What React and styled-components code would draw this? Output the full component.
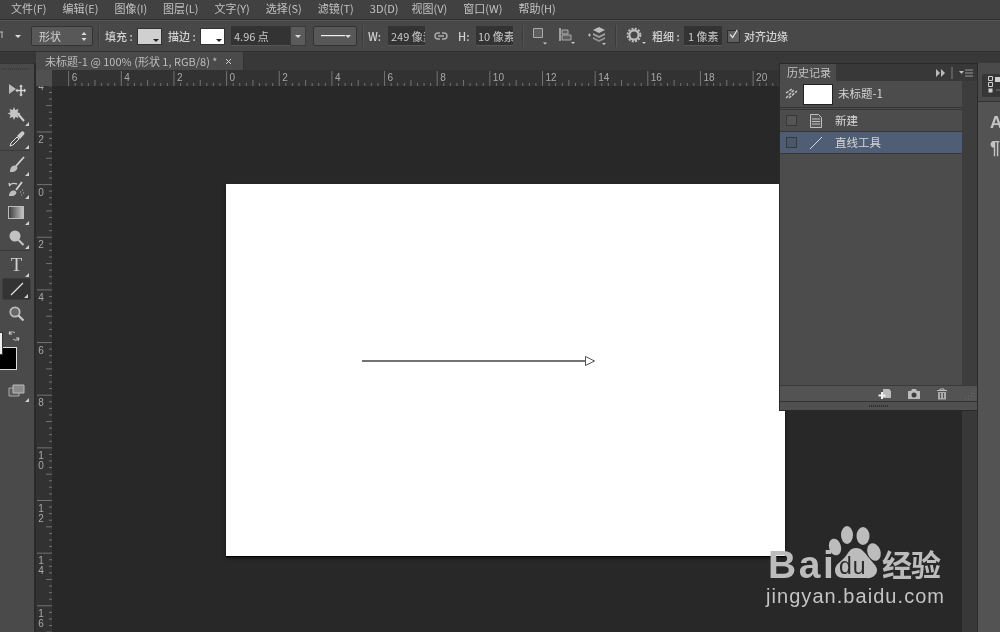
import React from "react";
import styled, { createGlobalStyle } from "styled-components";

const Global = createGlobalStyle`
  html, body { margin: 0; padding: 0; background: #282828; }
  * { box-sizing: border-box; }
`;
const FONT = `"Noto Sans CJK SC", "Liberation Sans", sans-serif`;

const Shell = styled.div`
  position: relative; width: 1000px; height: 632px; overflow: hidden;
  display: flex; flex-direction: column; background: #282828;
  font-family: ${FONT}; color: #c4c4c4; font-size: 11px; filter: blur(0.3px);
`;
const MenuBar = styled.div`
  height: 20px; flex: none; display: flex; gap: 16px; padding: 0 0 3px 11px; align-items: center;
  background: #414141; border-bottom: 1px solid #2e2e2e; white-space: nowrap; color: #c2c2c2;
`;
const MenuItem = styled.span`font-size: 11px; line-height: 16px; margin-right: ${p => p.$mr || 0}px;`;

const OptionsBar = styled.div`
  height: 32px; flex: none; display: flex; align-items: center; white-space: nowrap;
  background: #484848; border-bottom: 1px solid #2f2f2f; border-top: 1px solid #555;
`;
const Opt = styled.div`
  flex: none; margin-left: ${p => p.$ml || 0}px; display: flex; align-items: center;
`;
const Label = styled(Opt)`
  width: ${p => (p.$w ? `${p.$w}px` : "auto")}; font-size: 11px; color: #d2d2d2; font-weight: 500;
`;
const Divider = styled(Opt)`width: 1px; height: 22px; background: #3a3a3a; box-shadow: 1px 0 0 #545454;`;
const SelectBox = styled(Opt)`
  width: ${p => p.$w}px; height: 20px; border: 1px solid #333; border-radius: 2px;
  background: #585858; justify-content: space-between; padding: 0 5px 0 7px; font-size: 11px; color: #d2d2d2;
`;
const Swatch = styled(Opt)`
  position: relative; width: 25px; height: 17px; background: ${p => p.$c}; border: 1px solid #333;
  &::after { content: ""; position: absolute; right: 2px; bottom: 2px; border: 3px solid transparent; border-top-color: #222; border-bottom: 0; }
`;
const NumberInput = styled(Opt)`
  width: ${p => p.$w}px; height: 20px; background: #333; overflow: hidden; padding-left: ${p => p.$pl ?? 4}px;
  font-size: 11px; color: #c9c9c9; border-bottom: 1px solid #565656;
`;
const DropBtn = styled(Opt)`
  width: 16px; height: 20px; background: #5b5b5b; justify-content: center; border: 1px solid #3a3a3a;
`;
const Caret = styled.i`
  display: block; border: 3px solid transparent; border-top-color: ${p => p.$c || "#ddd"}; border-bottom: 0;
`;
const Check = styled(Opt)`
  width: 13px; height: 13px; background: #606060; border: 1px solid #2e2e2e; justify-content: center;
`;

const Workspace = styled.div`flex: 1; display: flex; min-height: 0; background: #383838;`;
const ToolBar = styled.div`
  width: 36px; flex: none; display: flex; flex-direction: column; align-items: stretch; background: #4a4a4a;
  margin-top: 11px; border-top: 1px solid #333; border-right: 2px solid #2a2a2a; padding-top: 4px;
`;
const Grip = styled.div`
  height: 2px; margin: 0 4px 7px 2px; flex: none;
  background: repeating-linear-gradient(90deg, #3c3c3c 0 1px, transparent 1px 2px);
`;
const Tool = styled.div`
  height: ${p => p.$h || 25}px; flex: none; position: relative; display: flex; align-items: center; justify-content: center;
  margin: 0 3px 0 2px; font-family: "Liberation Serif", serif; font-size: 19px; color: #cfcfcf;
  ${p => p.$active && `background: #333; border: 1px solid #3c3c3c; border-radius: 2px;`}
  ${p => p.$tri && `&::after { content: ""; position: absolute; right: 2px; bottom: 1px; border-left: 4px solid transparent; border-bottom: 4px solid #d0d0d0; }`}
`;
const ToolRule = styled.div`height: 1px; flex: none; background: #3a3a3a; margin: 0 4px ${p => p.$mb || 0}px 0;`;
const Colors = styled.div`height: 50px; flex: none; position: relative;`;
const BgColor = styled.div`
  position: absolute; left: -6px; top: 19px; width: 23px; height: 23px; background: #000; border: 1px solid #ddd;
`;
const FgColor = styled.div`
  position: absolute; left: -8px; top: 4px; width: 11px; height: 23px; background: #eee; border: 1px solid #333;
`;
const SwapIcon = styled.div`position: absolute; left: 8px; top: 2px; width: 12px; height: 12px;`;

const Main = styled.div`
  flex: 1; min-width: 0; display: flex; flex-direction: column;
`;
const TabBar = styled.div`
  height: 18px; flex: none; background: #383838; display: flex; align-items: flex-end;
`;
const DocTab = styled.div`
  width: 208px; height: 18px; background: #4a4a4a; display: flex; align-items: center; padding-left: 9px;
  font-size: 11px; color: #bcbcbc; white-space: nowrap; gap: 7px; border-right: 1px solid #333;
`;
const RulerRow = styled.div`height: 16px; flex: none; display: flex; background: #323232;`;
const RulerCorner = styled.div`width: 16px; flex: none; background: #505050;`;
const CanvasRow = styled.div`flex: 1; min-height: 0; display: flex;`;
const VRulerWrap = styled.div`width: 16px; flex: none; background: #323232;`;
const Canvas = styled.div`
  flex: 1; min-width: 0; background: #282828; padding: 98px 0 0 174px; overflow: hidden;
  border-right: 15px solid #383838;
`;
const Doc = styled.div`
  width: 559px; height: 372px; background: #fff; box-shadow: 0 1px 0 #000, 0 2px 3px rgba(0,0,0,.6);
`;
const Dock = styled.div`
  width: 23px; flex: none; background: #535353; border-left: 1px solid #2b2b2b; margin-top: 11px;
  display: flex; flex-direction: column; overflow: hidden;
`;
const DockCap = styled.div`
  height: 39px; flex: none; border-bottom: 1px solid #333; padding: 11px 0 0 4px; background: #4a4a4a;
`;
const DockBox = styled.div`
  width: 24px; height: 23px; background: #363636; border-radius: 2px 0 0 2px; padding: 2px 0 0 6px;
`;
const DockGlyph = styled.div`
  font-family: "Liberation Sans", sans-serif; font-size: ${p => p.$fs}px; font-weight: 700; color: #c4c4c4;
  padding-left: 12px; height: ${p => p.$h}px; display: flex; align-items: center;
`;

const HistoryPanel = styled.div`
  position: absolute; left: 780px; top: 64px; width: 197px; height: 346px;
  display: flex; flex-direction: column; background: #4b4b4b; box-shadow: 0 0 0 1px #2a2a2a;
`;
const PanelHead = styled.div`
  height: 17px; flex: none; display: flex; justify-content: space-between; align-items: center; background: #383838; padding-right: 4px;
`;
const PanelTab = styled.div`
  width: 56px; height: 17px; background: #4b4b4b; font-size: 11px; color: #c4c4c4; padding-left: 7px; line-height: 16px;
`;
const HeadIcons = styled.div`display: flex; align-items: center; gap: 5px;`;
const PanelBody = styled.div`flex: 1; display: flex; min-height: 0;`;
const List = styled.div`flex: 1; display: flex; flex-direction: column; background: #4c4c4c;`;
const SnapRow = styled.div`
  height: 27px; flex: none; display: flex; align-items: center; padding-left: 5px;
  border-bottom: 1px solid #353535; font-size: 11.5px; color: #d4d4d4;
`;
const SnapName = styled.span`margin-top: -2px;`;
const Thumb = styled.div`
  width: 30px; height: 21px; background: #fff; border: 1px solid #222; margin: 0 5px 0 5px; flex: none;
`;
const HistRow = styled.div`
  height: ${p => (p.$first ? 23 : 22)}px; flex: none; display: flex; align-items: center; padding-left: 6px; font-size: 11.5px; color: #d6d6d6;
  border-bottom: 1px solid #353535; background: ${p => p.$sel ? "#4f5e74" : "#4c4c4c"};
  border-top: ${p => p.$first ? "1px solid #353535" : "0"}; margin-top: ${p => p.$first ? 1 : 0}px;
`;
const RowText = styled.span`margin-top: -2px;`;
const RowCheck = styled.div`width: 11px; height: 11px; border: 1px solid #383838; background: ${p => p.$sel ? "#4a586c" : "#555"}; flex: none;`;
const RowIcon = styled.div`width: 16px; height: 16px; margin: 0 10px 0 12px; flex: none; display: flex;`;
const Scrollbar = styled.div`width: 15px; flex: none; background: #3d3d3d;`;
const PanelFoot = styled.div`
  height: 17px; flex: none; display: flex; align-items: center; justify-content: flex-end; gap: 15px; padding-right: 2px;
  background: #535353; border-top: 1px solid #3a3a3a; border-bottom: 1px solid #333;
`;
const PanelGrip = styled.div`
  height: 8px; flex: none; background: #505050; display: flex; align-items: center; justify-content: center;
  &::after { content: ""; width: 19px; height: 2px; background: repeating-linear-gradient(90deg, #2c2c2c 0 1px, transparent 1px 2px); }
`;

const Watermark = styled.div`
  position: absolute; left: 766px; top: 524px; width: 182px; height: 86px; color: #bcbcbc;
`;
const Bai = styled.span`
  position: absolute; left: 2px; top: 19px; font-family: "Liberation Sans", sans-serif; font-weight: 700; font-size: 39px; line-height: 44px; letter-spacing: 2.6px;
`;
const Du = styled.span`
  position: absolute; left: 73px; top: 29px; font-family: "Liberation Sans", sans-serif; font-weight: 400; font-size: 23px; line-height: 26px; letter-spacing: 1px; color: #2b2b2b;
`;
const Jing = styled.span`
  position: absolute; left: 116px; top: 19px; font-size: 30px; line-height: 40px; font-weight: 700; white-space: nowrap; letter-spacing: -1px;
`;
const Url = styled.span`
  position: absolute; left: 0; top: 60px; font-family: "Liberation Sans", sans-serif; font-size: 20px; line-height: 24px; letter-spacing: 1.05px; white-space: nowrap; color: #c4c4c4;
`;
const PawSvg = styled.svg`position: absolute; left: 0; top: 0;`;

const ORIGIN_X = 226.6, ORIGIN_Y = 184.6, STEP = 52.65;
const TICK = "#727272", DIGIT = "#a8a8a8";

function HRuler() {
  const items = []; const labels = [];
  for (let i = -24; i <= 90; i++) {
    const x = ORIGIN_X + (i / 8) * STEP - 52;
    if (x < 0 || x > 924) continue;
    const h = i % 8 === 0 ? 15 : i % 4 === 0 ? 6 : 3;
    items.push(<line key={i} x1={x} x2={x} y1={16} y2={16 - h} stroke={TICK} />);
    if (i % 8 === 0) labels.push(
      <text key={"l" + i} x={x + 3} y={11} fill={DIGIT} fontSize="10" fontFamily="Liberation Sans, sans-serif">{Math.abs(i / 4)}</text>
    );
  }
  return <svg width="908" height="16" style={{ display: "block" }}>{items}{labels}</svg>;
}
function VRuler() {
  const items = []; const labels = [];
  for (let i = -16; i <= 72; i++) {
    const y = ORIGIN_Y + (i / 8) * STEP - 86;
    const w = i % 8 === 0 ? 15 : i % 4 === 0 ? 6 : 3;
    items.push(<line key={i} y1={y} y2={y} x1={16 - w} x2={16} stroke={TICK} />);
    if (i % 8 === 0) {
      String(Math.abs(i / 4)).split("").forEach((d, k) => labels.push(
        <text key={`t${i}${k}`} x={5} y={y + 11 + k * 10} textAnchor="middle" fill={DIGIT} fontSize="10" fontFamily="Liberation Sans, sans-serif">{d}</text>
      ));
    }
  }
  return <svg width="16" height="546" style={{ display: "block" }}>{items}{labels}</svg>;
}

const Ico = ({ w = 16, h = 16, children, style }) => (
  <svg width={w} height={h} viewBox={`0 0 ${w} ${h}`} style={{ display: "block", ...style }}>{children}</svg>
);

function Options() {
  return (
    <OptionsBar>
      <Opt><Ico w={4} h={10}><path d="M0 1h3M2 1v6" stroke="#bbb" /></Ico></Opt>
      <Opt $ml={11}><Caret /></Opt>
      <SelectBox $w={62} $ml={10}>
        <span>形状</span>
        <Ico w={6} h={11}><path d="M3 1 L5.5 4 H.5 Z M3 10 L5.5 7 H.5 Z" fill="#ddd" /></Ico>
      </SelectBox>
      <Divider $ml={5} />
      <Label $ml={6} $w={27}>填充 :</Label>
      <Swatch $c="#d0d0d0" $ml={5} />
      <Label $ml={6} $w={27}>描边 :</Label>
      <Swatch $c="#fff" $ml={5} />
      <NumberInput $w={59} $ml={6} $pl={3}>4.96 点</NumberInput>
      <DropBtn><Caret /></DropBtn>
      <SelectBox $w={44} $ml={7}>
        <Ico w={30} h={4}><path d="M0 1.5H30" stroke="#eee" strokeWidth="1.5" /></Ico>
        <Caret />
      </SelectBox>
      <Divider $ml={5} />
      <Label $ml={5} $w={12}>W:</Label>
      <NumberInput $w={37} $ml={8} $pl={3}>249 像素</NumberInput>
      <Opt $ml={9}>
        <Ico w={14} h={10}><path d="M6 2H4a3 3 0 0 0 0 6h2M8 2h2a3 3 0 0 1 0 6H8M4 5h6" fill="none" stroke="#aaa" strokeWidth="1.4" /></Ico>
      </Opt>
      <Label $ml={10} $w={12}>H:</Label>
      <NumberInput $w={37} $ml={6} $pl={2}>10 像素</NumberInput>
      <Divider $ml={9} />
      <Opt $ml={9}>
        <Ico w={15} h={18}><path d="M1.5 1.5h9v9h-9z" fill="#5e5e5e" stroke="#aaa" /><path d="M11 15.5h4l-2 2z" fill="#ccc" /></Ico>
      </Opt>
      <Opt $ml={12}>
        <Ico w={16} h={18}><path d="M1 1v13" stroke="#bbb" strokeWidth="1.5" /><path d="M3 3h6v4H3zM3 8h9v5H3z" fill="#5e5e5e" stroke="#aaa" /><path d="M12 15h4l-2 2z" fill="#ccc" /></Ico>
      </Opt>
      <Opt $ml={12}>
        <Ico w={20} h={20}>
          <path d="M1 9h3M2.5 7.5v3" stroke="#bbb" />
          <path d="M12 1l6 3-6 3-6-3z" fill="#bbb" /><path d="M6 7l6 3 6-3v2l-6 3-6-3z" fill="#a0a0a0" /><path d="M6 11l6 3 6-3v2l-6 3-6-3z" fill="#909090" /><path d="M15 17h4l-2 2z" fill="#ccc" />
        </Ico>
      </Opt>
      <Divider $ml={8} />
      <Opt $ml={10}>
        <Ico w={20} h={18}>
          <circle cx="8" cy="8" r="4.6" fill="none" stroke="#bdbdbd" strokeWidth="2.2" />
          <circle cx="8" cy="8" r="6.4" fill="none" stroke="#bdbdbd" strokeWidth="2" strokeDasharray="2 1.35" />
          <path d="M16 15h4l-2 2z" fill="#ccc" />
        </Ico>
      </Opt>
      <Label $ml={6} $w={26}>粗细 :</Label>
      <NumberInput $w={38} $ml={6} $pl={4}>1 像素</NumberInput>
      <Check $ml={5}>
        <Ico w={13} h={13} style={{ marginTop: -3 }}><path d="M2.5 6.5l3 3.5 5.5-9" fill="none" stroke="#e4e4e4" strokeWidth="1.4" /></Ico>
      </Check>
      <Label $ml={4}>对齐边缘</Label>
    </OptionsBar>
  );
}

function Tools() {
  return (
    <ToolBar>
      <Grip />
      <Tool $h={25}><Ico w={18} h={14}>
        <path d="M1 1l7 5-7 5z" fill="#bbb" /><path d="M13 3v9M8.5 7.5h9" stroke="#d4d4d4" strokeWidth="1.6" /><path d="M13 1.5l2 2h-4zM13 13.5l-2-2h4zM7.5 7.5l2-2v4zM18 7.5l-2 2v-4z" fill="#d4d4d4" />
      </Ico></Tool>
      <Tool $h={25} $tri><Ico w={20} h={18}>
        <path d="M11 8l6 7" stroke="#cfcfcf" strokeWidth="2" /><path d="M7 1l1.3 3 3.2-1-1 3.2 3 1.3-3 1.3 1 3.2-3.2-1L7 14l-1.3-3-3.2 1 1-3.2-3-1.3 3-1.3-1-3.2 3.2 1z" fill="#c4c4c4" />
      </Ico></Tool>
      <Tool $h={23} $tri><Ico w={18} h={18}>
        <path d="M2 16l1-3 6-6 2 2-6 6z" fill="#484848" stroke="#ddd" /><path d="M9 6l4-4a1.8 1.8 0 0 1 3 2.500l-4 4.500z" fill="#ccc" />
      </Ico></Tool>
      <ToolRule $mb={2} />
      <Tool $h={24} $tri><Ico w={18} h={18}>
        <path d="M16 1L8 10" stroke="#d2d2d2" strokeWidth="1.8" /><path d="M2 16c0-4 2-7 5-6.500s3 3 1 5-4 1.500-6 1.500z" fill="#bdbdbd" />
      </Ico></Tool>
      <Tool $h={23} $tri><Ico w={20} h={18}>
        <path d="M2 6c2-3 5-3 8-2M3 6l-1-3" fill="none" stroke="#ccc" strokeWidth="1.4" /><path d="M15 2L9 10" stroke="#d2d2d2" strokeWidth="1.8" /><path d="M2 16c0-3 2-6 5-5.500s3 3 1 4.500-4 1-6 1z" fill="#bdbdbd" /><path d="M13 12h1M15 10h1M16 13h1M14 15h1" stroke="#bbb" />
      </Ico></Tool>
      <Tool $h={26} $tri><Ico w={18} h={14}>
        <defs><linearGradient id="gr"><stop offset="0" stopColor="#3a3a3a" /><stop offset="1" stopColor="#c8c8c8" /></linearGradient></defs>
        <rect x=".5" y=".5" width="15" height="12" fill="url(#gr)" stroke="#bbb" />
      </Ico></Tool>
      <Tool $h={24} $tri><Ico w={18} h={18}>
        <circle cx="7" cy="7" r="5.500" fill="#c2c2c2" /><path d="M10.500 11l5 5" stroke="#c8c8c8" strokeWidth="2" />
      </Ico></Tool>
      <ToolRule $mb={1} />
      <Tool $h={26} $tri>T</Tool>
      <Tool $h={22} $tri $active><Ico w={16} h={16}><path d="M2 14L14 2" stroke="#e0e0e0" strokeWidth="1.3" /></Ico></Tool>
      <Tool $h={28}><Ico w={18} h={18}>
        <circle cx="7" cy="7" r="4.700" fill="#666" stroke="#bdbdbd" strokeWidth="1.800" /><path d="M10.500 10.500l5 5" stroke="#c8c8c8" strokeWidth="2.200" />
      </Ico></Tool>
      <Colors>
        <BgColor />
        <FgColor />
        <SwapIcon><Ico w={12} h={12}><path d="M2 1l-1 3 3 0M1.500 4C2 2 5 1 7 3M10 11l1-3-3 0M10.500 8C10 10 7 11 5 9" fill="none" stroke="#d0d0d0" /></Ico></SwapIcon>
      </Colors>
      <Tool $h={25} $tri><Ico w={18} h={14}>
        <path d="M1 4h10v8H1z" fill="#5a5a5a" stroke="#aaa" /><path d="M5 1h11v8H5z" fill="#8a8a8a" stroke="#bbb" />
      </Ico></Tool>
    </ToolBar>
  );
}

function History() {
  return (
    <HistoryPanel>
      <PanelHead>
        <PanelTab>历史记录</PanelTab>
        <HeadIcons>
          <Ico w={10} h={8}><path d="M0 0l4 4-4 4zM5 0l4 4-4 4z" fill="#bbb" /></Ico>
          <Ico w={3} h={12}><path d="M1 0v12" stroke="#5c5c5c" strokeWidth="2" /></Ico>
          <Ico w={14} h={8}><path d="M0 2h5L2.500 5z" fill="#bbb" /><path d="M6 1h8M6 4h8M6 7h8" stroke="#999" /></Ico>
        </HeadIcons>
      </PanelHead>
      <PanelBody>
        <List>
          <SnapRow>
            <Ico w={13} h={12}><path d="M1 10l8-8M4 10l8-7M1 5l6-4" stroke="#c8c8c8" strokeWidth="1.400" strokeDasharray="3 1" /></Ico>
            <Thumb />
            <SnapName>未标题-1</SnapName>
          </SnapRow>
          <HistRow $first>
            <RowCheck />
            <RowIcon>
              <Ico w={14} h={16}><path d="M1.500 1.500h8l3 3v10h-11z" fill="#585858" stroke="#c0c0c0" /><path d="M3 6h8M3 8.500h8M3 11h8" stroke="#c0c0c0" /></Ico>
            </RowIcon>
            <RowText>新建</RowText>
          </HistRow>
          <HistRow $sel>
            <RowCheck $sel />
            <RowIcon>
              <Ico w={14} h={16}><path d="M1 14L13 2" stroke="#d8d8d8" /></Ico>
            </RowIcon>
            <RowText>直线工具</RowText>
          </HistRow>
        </List>
        <Scrollbar />
      </PanelBody>
      <PanelFoot>
        <Ico w={14} h={12}><path d="M5 1h6l2 2v7H5z" fill="#bbb" /><path d="M4 4v7M0.500 7.500h7" stroke="#eee" strokeWidth="2" /></Ico>
        <Ico w={14} h={12}><path d="M1 3h3l1-2h4l1 2h3v8H1z" fill="#bbb" /><circle cx="7" cy="7" r="2.500" fill="#3d3d3d" /></Ico>
        <Ico w={12} h={12}><path d="M1 2.500h10M4 2V1h4v1" stroke="#bbb" fill="none" /><path d="M2 4h8v7.500H2z" fill="#aaa" /><path d="M4.500 5v5M7.500 5v5" stroke="#555" /></Ico>
        <Ico w={12} h={12}><path d="M11 2v1M8 5h1M11 5v1M5 8h1M8 8h1M11 8v1M2 11h1M5 11h1M8 11h1M11 11h1" stroke="#6c6c6c" /></Ico>
      </PanelFoot>
      <PanelGrip />
    </HistoryPanel>
  );
}

const MENUS = [["文件(F)"], ["编辑(E)"], ["图像(I)"], ["图层(L)"], ["文字(Y)"], ["选择(S)"], ["滤镜(T)"], ["3D(D)", -3], ["视图(V)"], ["窗口(W)"], ["帮助(H)"]];

export default function App() {
  return (
    <Shell>
      <Global />
      <MenuBar>
        {MENUS.map(([m, mr]) => <MenuItem key={m} $mr={mr}>{m}</MenuItem>)}
      </MenuBar>
      <Options />
      <Workspace>
        <Tools />
        <Main>
          <TabBar>
            <DocTab>
              <span>未标题-1 @ 100% (形状 1, RGB/8) *</span>
              <Ico w={7} h={7}><path d="M1 1l5 5M6 1l-5 5" stroke="#ccc" /></Ico>
            </DocTab>
          </TabBar>
          <RulerRow>
            <RulerCorner />
            <HRuler />
          </RulerRow>
          <CanvasRow>
            <VRulerWrap><VRuler /></VRulerWrap>
            <Canvas>
              <Doc>
                <Ico w={559} h={372}>
                  <path d="M136 177H359" stroke="#444" strokeWidth="1.700" />
                  <path d="M359.500 172.500L368.500 177L359.500 181.500Z" fill="#fff" stroke="#555" />
                </Ico>
              </Doc>
            </Canvas>
          </CanvasRow>
        </Main>
        <Dock>
          <DockCap>
            <DockBox>
              <Ico w={14} h={19}><path d="M.5 .5h4v4h-4zM.5 6.500h4v4h-4z" fill="none" stroke="#cfcfcf" /><path d="M.5 12.500h4v4h-4z" fill="#cfcfcf" /><path d="M7 1h7v5H7z" fill="#cfcfcf" /><path d="M8 14h6" stroke="#777" /></Ico>
            </DockBox>
          </DockCap>
          <DockGlyph $h={42} $fs={17}>A</DockGlyph>
          <DockGlyph $h={8} $fs={18}>¶</DockGlyph>
        </Dock>
      </Workspace>
      <History />
      <Watermark>
        <PawSvg width="182" height="86" viewBox="0 0 182 86">
          <ellipse cx="81" cy="11" rx="6" ry="9" fill="#bcbcbc" />
          <ellipse cx="97" cy="12" rx="6.500" ry="9" fill="#bcbcbc" />
          <ellipse cx="69" cy="23" rx="6" ry="8.500" fill="#bcbcbc" transform="rotate(-15 69 23)" />
          <ellipse cx="108" cy="28" rx="6.500" ry="9" fill="#bcbcbc" transform="rotate(-20 108 28)" />
          <path d="M90 24c6 0 9 5 13 10s8 8 8 12c0 5-5 9-11 8H78c-6 0-9-3-9-8 0-6 6-8 10-13s5-9 11-9z" fill="#bcbcbc" />
        </PawSvg>
        <Bai>Bai</Bai>
        <Du>du</Du>
        <Jing>经验</Jing>
        <Url>jingyan.baidu.com</Url>
      </Watermark>
    </Shell>
  );
}
